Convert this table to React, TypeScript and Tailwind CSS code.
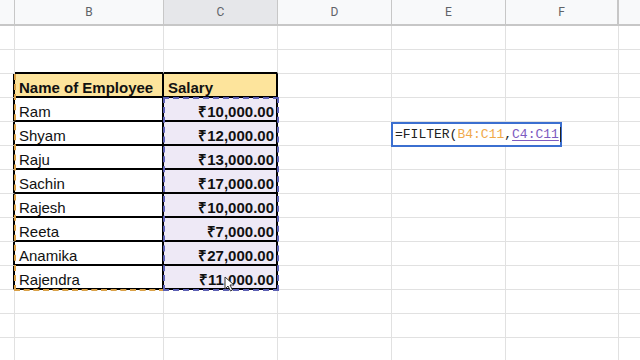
import type { ReactNode } from 'react';

const rows = [
  { name: 'Ram', salary: '₹10,000.00' },
  { name: 'Shyam', salary: '₹12,000.00' },
  { name: 'Raju', salary: '₹13,000.00' },
  { name: 'Sachin', salary: '₹17,000.00' },
  { name: 'Rajesh', salary: '₹10,000.00' },
  { name: 'Reeta', salary: '₹7,000.00' },
  { name: 'Anamika', salary: '₹27,000.00' },
  { name: 'Rajendra', salary: '₹11,000.00' },
];

const grid = 'h-[24px] shrink-0 border-b border-r border-[#e1e1e1]';

function EmptyRest() {
  return (
    <>
      <div className={`${grid} w-[114px]`} />
      <div className={`${grid} w-[114px]`} />
      <div className={`${grid} w-[113px]`} />
      <div className={`${grid} flex-1 border-r-0`} />
    </>
  );
}

function Row({ a, b, c }: { a?: string; b?: ReactNode; c?: ReactNode }) {
  return (
    <div className="flex">
      <div className={`${grid} w-[15px] ${a ?? ''}`} />
      {b ?? <div className={`${grid} w-[149px]`} />}
      {c ?? <div className={`${grid} w-[114px]`} />}
      <EmptyRest />
    </div>
  );
}

function Cursor() {
  return (
    <svg className="absolute left-[224px] top-[276px]" width="11" height="16" viewBox="0 0 11 16">
      <path d="M1 1 L1 13 L4 10 L6.5 15 L8.5 14 L6 9 L10 9 Z" fill="#fff" stroke="#333" strokeWidth="1" strokeLinejoin="round" />
    </svg>
  );
}

export default function App() {
  return (
    <div className="relative w-[640px] h-[360px] overflow-hidden bg-white font-['Liberation_Sans',Arial,sans-serif] text-[15px] text-[#111]">
      {/* column headers */}
      <div className="flex h-[26px] border-b-2 border-[#c7c7c7] bg-[#f8f9fa] text-[12px] text-[#5f6368] font-['Roboto',sans-serif]">
        <div className="w-[15px] shrink-0 border-r border-[#c7c7c7]" />
        <div className="w-[149px] shrink-0 border-r border-[#c7c7c7] flex items-center justify-center">B</div>
        <div className="w-[114px] shrink-0 border-r border-[#c7c7c7] bg-[#e6e7ea] flex items-center justify-center">C</div>
        <div className="w-[114px] shrink-0 border-r border-[#c7c7c7] flex items-center justify-center">D</div>
        <div className="w-[114px] shrink-0 border-r border-[#c7c7c7] flex items-center justify-center">E</div>
        <div className="w-[113px] shrink-0 border-r-2 border-[#c7c7c7] flex items-center justify-center">F</div>
        <div className="flex-1" />
      </div>

      <Row />
      <Row
        b={<div className="h-[24px] w-[149px] shrink-0 border-r border-[#e1e1e1] border-b-2 border-b-black" />}
        c={<div className="h-[24px] w-[114px] shrink-0 border-r border-[#e1e1e1] border-b-2 border-b-black" />}
      />

      {/* table header */}
      <Row
        a="border-r-2 border-r-black"
        b={
          <div className="h-[24px] w-[149px] shrink-0 border-r-2 border-b-2 border-black bg-[#fde49c] pl-[4px] flex items-end leading-[17px] font-bold">
            Name of Employee
          </div>
        }
        c={
          <div className="h-[24px] w-[114px] shrink-0 border-r-2 border-b-2 border-black bg-[#fde49c] pl-[4px] flex items-end leading-[17px] font-bold">
            Salary
          </div>
        }
      />

      {rows.map((r) => (
        <Row
          key={r.name}
          a="border-r-2 border-r-black"
          b={
            <div className="h-[24px] w-[149px] shrink-0 border-r-2 border-b-2 border-black pl-[4px] flex items-end leading-[17px]">
              {r.name}
            </div>
          }
          c={
            <div className="h-[24px] w-[114px] shrink-0 border-r-2 border-b-2 border-black bg-[#eee9f6] pr-[2px] flex items-end justify-end leading-[17px] font-bold">
              {r.salary}
            </div>
          }
        />
      ))}

      <Row />
      <Row />
      <Row />

      {/* range highlights */}
      <div className="absolute left-[14px] top-[74px] w-[151px] h-[217px] border-l-2 border-b-2 border-dashed border-[#d9a046] pointer-events-none" />
      <div className="absolute left-[163px] top-[97px] w-[116px] h-[194px] border-2 border-dashed border-[#5b5fb3] pointer-events-none" />

      {/* formula editor */}
      <div className="absolute left-[391px] top-[122px] w-[171px] h-[25px] border-2 border-[#3b6fd0] bg-white flex items-center pl-[2px] font-['Liberation_Mono',monospace] text-[13px] text-[#222]">
        <span>=FILTER(</span>
        <span className="text-[#f0a94a]">B4:C11</span>
        <span>,</span>
        <span className="text-[#7d5bbf] underline underline-offset-2">C4:C11</span>
        <span className="ml-[1px] h-[15px] w-px bg-[#222]" />
      </div>

      <Cursor />
    </div>
  );
}
